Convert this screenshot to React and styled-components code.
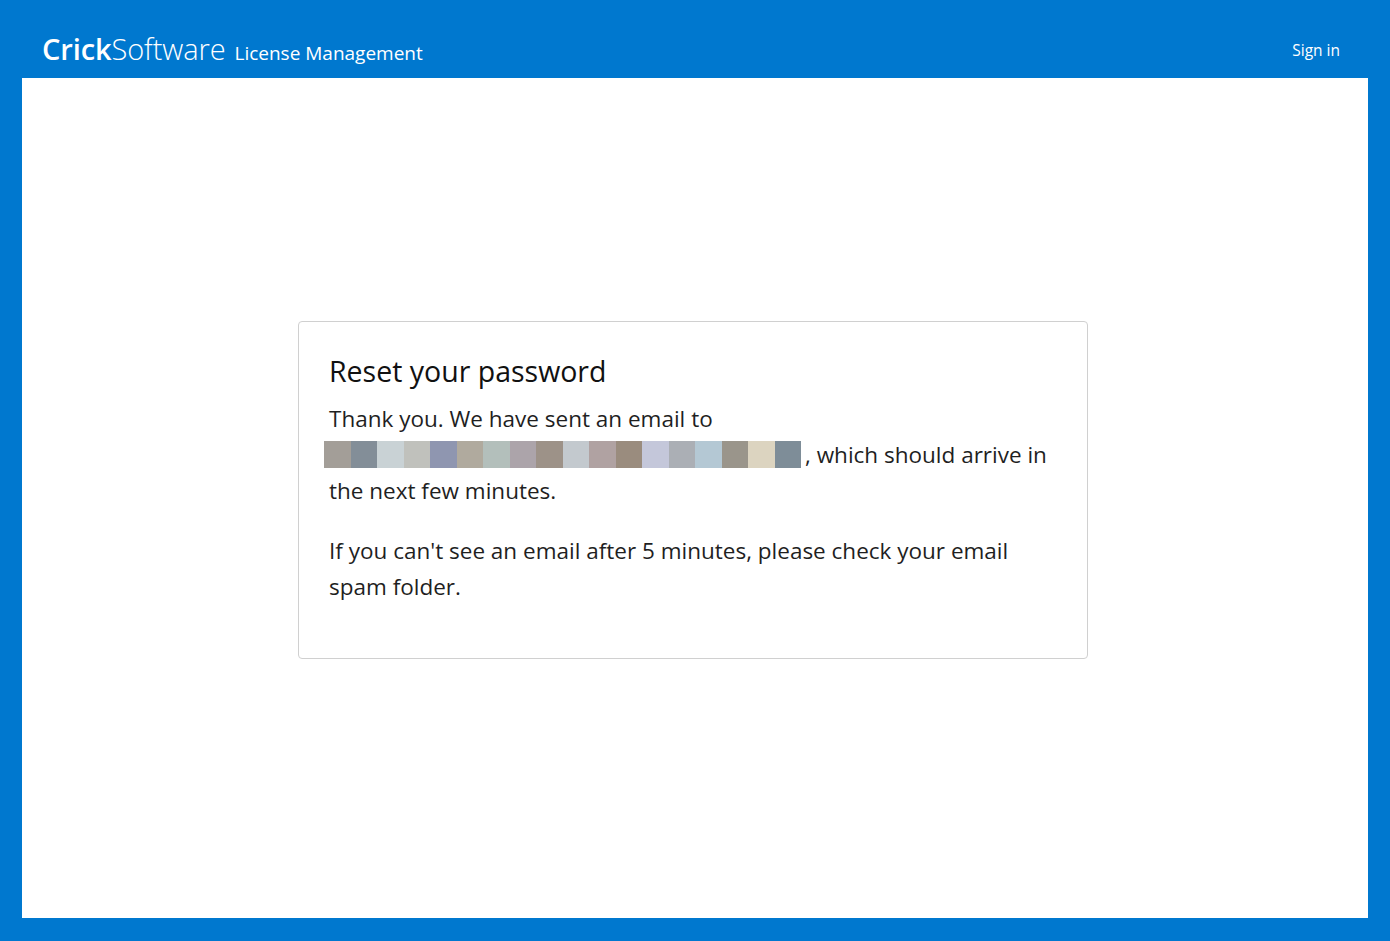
import React from "react";
import styled, { createGlobalStyle } from "styled-components";

const Global = createGlobalStyle`
  html, body { margin: 0; padding: 0; }
  body {
    background: #0078cf;
    font-family: "Open Sans", "Noto Sans", sans-serif;
    color: #212529;
  }
`;

const Page = styled.div`
  width: 1390px;
  height: 941px;
  background: #0078cf;
  display: flex;
  flex-direction: column;
  padding: 0 22px 23px;
  box-sizing: border-box;
`;

const Header = styled.header`
  height: 78px;
  display: flex;
  align-items: center;
  justify-content: space-between;
  padding: 18px 28px 0 20px;
  box-sizing: border-box;
  color: #fff;
  flex-shrink: 0;
`;

const Brand = styled.div`
  display: flex;
  align-items: baseline;
  gap: 9px;
`;

const Logo = styled.span`
  font-size: 29px;
  letter-spacing: -0.1px;
`;

const LogoBold = styled.span`
  font-weight: 600;
`;

const LogoLight = styled.span`
  font-weight: 300;
`;

const Product = styled.span`
  font-size: 19px;
  font-weight: 400;
`;

const SignIn = styled.a`
  font-size: 15.5px;
  color: #fff;
  text-decoration: none;
  margin-top: 4px;
`;

const Main = styled.main`
  flex: 1;
  background: #fff;
  display: flex;
  align-items: center;
  justify-content: center;
  padding-bottom: 17px;
  padding-right: 4px;
`;

const Card = styled.section`
  width: 790px;
  box-sizing: border-box;
  border: 1px solid #d0d0d0;
  border-radius: 4px;
  padding: 27px 30px 35px 30px;
`;

const Title = styled.h1`
  margin: 0 0 8px;
  font-size: 28.5px;
  font-weight: 500;
  line-height: 44px;
  color: #111;
`;

const Para = styled.p`
  margin: 0 0 24px;
  font-size: 22.5px;
  line-height: 36px;
  color: #1f1f1f;
  &:last-child { margin-bottom: 18px; }
`;

const Redacted = styled.span`
  display: inline-flex;
  vertical-align: middle;
  margin: -4px 4px 0 -5px;
  height: 27px;
`;

const Cell = styled.span`
  width: 26.5px;
  height: 27px;
  background: ${(p) => p.$c};
`;

const colors = [
  "#a39e98", "#838e98", "#c9d2d5", "#c0c1bc", "#8f96b0", "#b0aa9e",
  "#b3bfbb", "#aca4aa", "#9d9288", "#c3c9ce", "#b0a2a2", "#9a8c7e",
  "#c4c7da", "#abafb5", "#b4c8d4", "#9a958b", "#dcd4c0", "#7e8d98",
];

export default function App() {
  return (
    <>
      <Global />
      <Page>
        <Header>
          <Brand>
            <Logo>
              <LogoBold>Crick</LogoBold>
              <LogoLight>Software</LogoLight>
            </Logo>
            <Product>License Management</Product>
          </Brand>
          <SignIn href="#">Sign in</SignIn>
        </Header>
        <Main>
          <Card>
            <Title>Reset your password</Title>
            <Para>
              Thank you. We have sent an email to{" "}
              <Redacted>
                {colors.map((c, i) => (
                  <Cell key={i} $c={c} />
                ))}
              </Redacted>
              , which should arrive in the next few minutes.
            </Para>
            <Para>
              If you can't see an email after 5 minutes, please check your
              email spam folder.
            </Para>
          </Card>
        </Main>
      </Page>
    </>
  );
}
